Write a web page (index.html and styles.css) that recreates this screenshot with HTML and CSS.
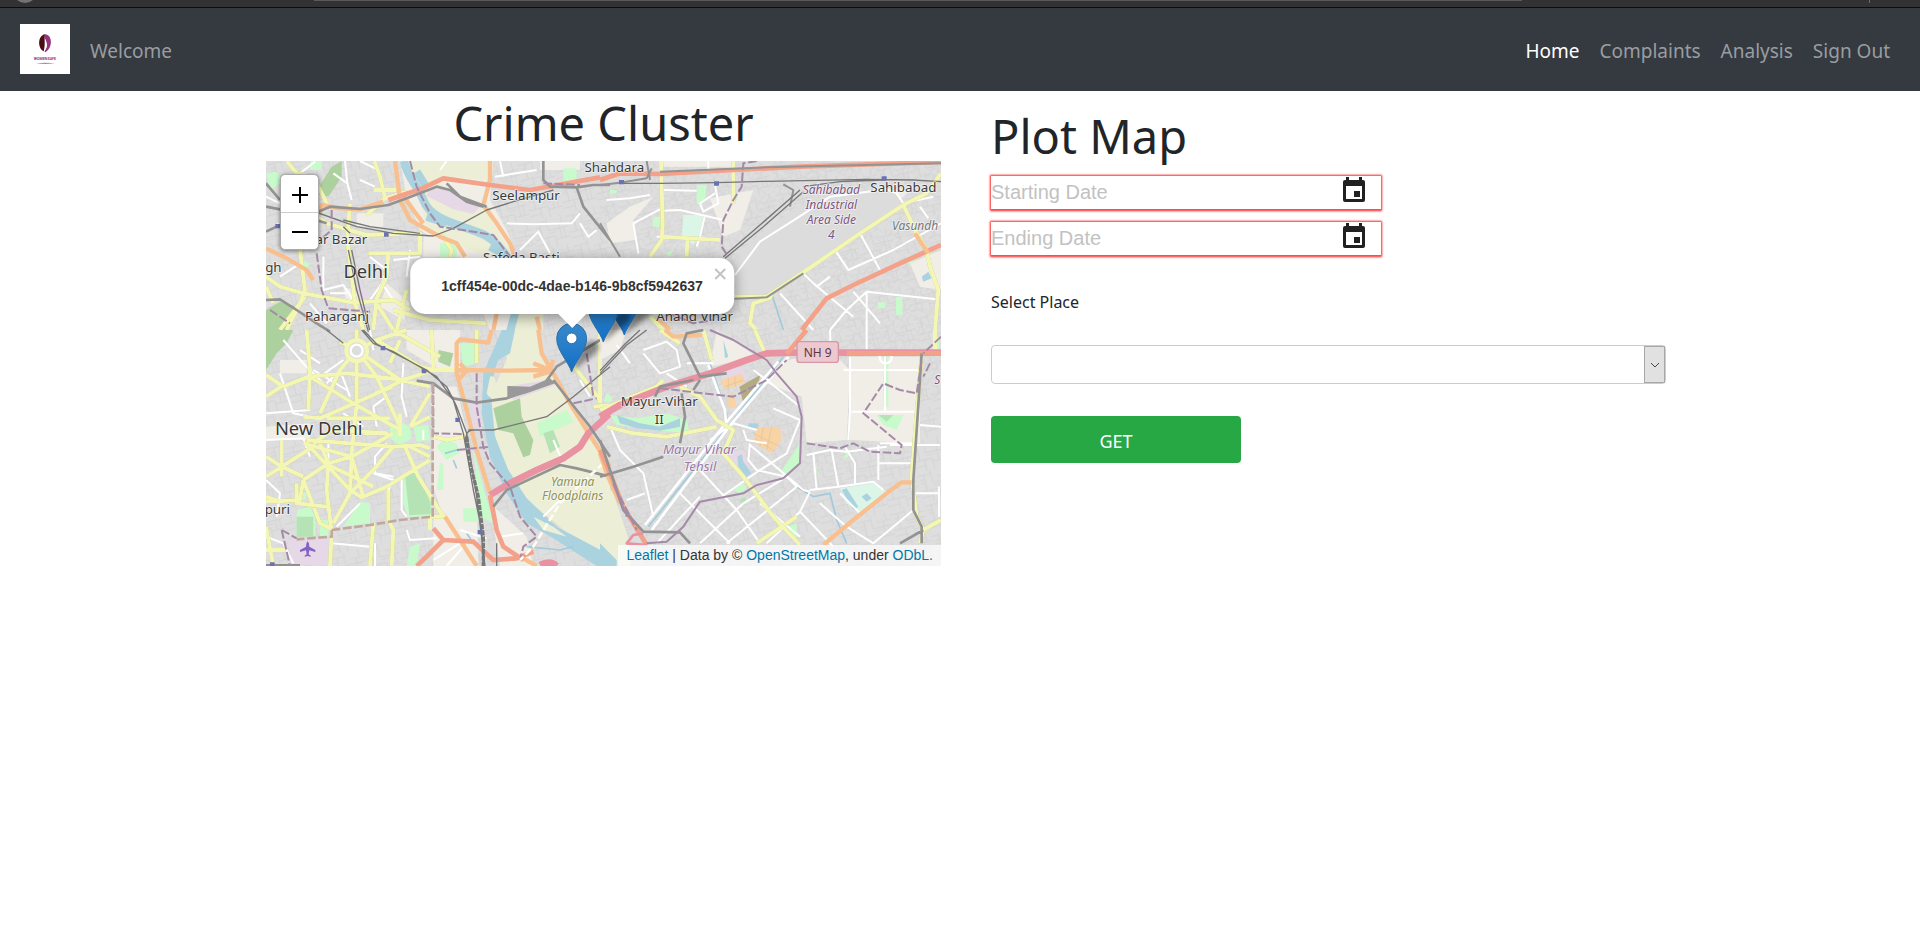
FILE: index.html
```html
<!DOCTYPE html>
<html lang="en">
<head>
<meta charset="utf-8">
<title>Crime Cluster</title>
<link rel="stylesheet" href="styles.css">
</head>
<body>
<div class="chrome" aria-hidden="true">
  <svg class="chrome-knob" viewBox="0 0 28 4"><circle cx="14" cy="-9" r="12" fill="#737373"/></svg>
  <span class="chrome-bar"></span>
  <span class="chrome-sep"></span>
</div>
<nav class="navbar">
  <a class="brand" href="#" aria-label="Logo">
    <svg class="logo" viewBox="0 0 150 150">
      <rect width="150" height="150" fill="#fff"/>
      <path d="M75 31C53 34 52 73 71 82C77 66 72 48 75 31Z" fill="#4a0d12"/>
      <path d="M75 31C98 32 99 72 76 85L73 82C79 75 83 67 80 56L77 47C74 43 73 36 75 31Z" fill="#963383"/>
      <path d="M75 49l4 8v12l-6 14 2-18z" fill="#fff"/>
      <text x="75" y="108" class="logo-text" text-anchor="middle">WOMENSAFE</text>
      <path d="M47 118q29-3 58 0q-29 4-58 0z" fill="#9a929c"/>
    </svg>
  </a>
  <a class="nav-link" href="#">Welcome</a>
  <div class="nav-right">
    <a class="nav-link active" href="#">Home</a>
    <a class="nav-link" href="#">Complaints</a>
    <a class="nav-link" href="#">Analysis</a>
    <a class="nav-link" href="#">Sign Out</a>
  </div>
</nav>
<main class="content">
  <section class="cluster">
    <h1 class="title centered">Crime Cluster</h1>
    <div class="map">
      <svg class="map-art" viewBox="0 0 2025 1215" role="img" aria-label="Map of Delhi">
        <defs>
          <pattern id="blocks" width="104" height="92" patternUnits="userSpaceOnUse" patternTransform="rotate(-14)">
            <path class="lot" d="M0 12H44V40H104M22 12V60M0 60H60V92M60 24H104M78 24V70M60 70H104M36 60V92M8 26H22M8 36H22M44 0V12M88 0V24M90 40V70M0 78H36M46 48H72"/>
          </pattern>
          <pattern id="plots" width="76" height="68" patternUnits="userSpaceOnUse" patternTransform="rotate(33)">
            <path class="lot" d="M0 14H76M0 44H50M18 14V44M34 14V44M50 14V68M64 0V14M18 44V68M50 56H76M34 54V68"/>
          </pattern>
          <linearGradient id="pin" x2="0" y2="1"><stop offset="0" stop-color="#3a8acb"/><stop offset="1" stop-color="#126fc6"/></linearGradient>
          <filter id="soft"><feGaussianBlur stdDeviation="8"/></filter>
          <g id="marker">
            <path d="M0 0L75 -60Q92 -84 66 -92Q42 -94 24 -60Z" fill="#000" opacity=".4" filter="url(#soft)"/>
            <path d="M0 0C-8 -28 -45 -64 -45 -101A45 45 0 0 1 45 -101C45 -64 8 -28 0 0Z" fill="url(#pin)" stroke="#2b6ea8" stroke-width="3"/>
            <circle cy="-101" r="16" fill="#fff" stroke="#2d73ac" stroke-width="3"/>
          </g>
        </defs>
        <rect width="2025" height="1215" fill="#dedede"/>
        <rect width="2025" height="1215" fill="url(#blocks)"/>
        <path d="M1000 0H2025V700L1300 1215H1000Z" fill="url(#plots)" opacity=".7"/>

        <!-- north-west land use -->
        <g transform="translate(-18 -213)">
          <path class="open" d="M420 213H700L690 330L740 420L770 500L800 720H690L600 500L480 420L440 320ZM490 440H600V500H490ZM290 370H370V410H290ZM840 213H960V240H840ZM380 580L450 640L430 690L360 650ZM250 590L330 620L310 650L260 640Z"/>
          <path class="field" d="M440 213H700L690 270L560 262L470 300ZM470 300L540 280L680 360L700 400L760 500H700L600 470L500 410ZM770 670H850V720H760Z"/>
          <path class="pinkish" d="M505 300L560 296L660 350L640 372L580 358L500 318ZM290 560L330 620L300 660Z"/>
          <path class="wood" d="M215 230L245 213V260L205 320L165 310ZM18 660L60 635L110 650L75 720H18Z"/>
          <path class="park" d="M18 250L50 245L70 275L30 300ZM120 510L150 520L140 540L120 530ZM540 460H590V500H540ZM910 235H950V275H910ZM150 213H185V240H150Z"/>
          <path class="water-line" d="M432 213C440 260 475 290 490 330C510 385 580 400 650 425C700 440 730 480 760 530" stroke-width="25"/>
          <path class="water-line" d="M470 245L495 285M500 380L560 400M690 470L730 490M765 670L750 725" stroke-width="24"/>
          <path class="white" d="M255 213L262 280L275 330M262 280L220 250M300 213L345 235M300 270L345 290M120 250L165 215M70 340L110 380L170 390M18 320L60 340M190 500V600L250 585L285 640M330 500L380 540L366 580L330 630M366 580L400 630M210 610H260M400 510L480 500M440 560L450 480M740 400L820 403L935 400L960 370M780 480L835 425L870 490M960 400L985 440L1010 420M705 260L830 240M720 213L730 260M560 213L540 240M50 400L120 440M150 640L200 700M60 560L120 520"/>
          <path class="road" d="M80 213L110 250L160 260L205 350M343 213L360 260L375 325L320 375M375 325L440 305M340 300H410M110 340L200 400L320 435L480 430V490H325M18 560L60 590L130 610L280 638L400 630L450 660M120 480L135 600L120 640L80 720M135 620L60 720M270 340L262 450L285 640L310 720M385 490L380 560L350 625L340 720M350 640L400 720M545 435L575 480L570 500M400 660L510 690L680 700M410 720L440 600M18 590L40 640"/>
          <path class="orange" d="M405 213L420 330L450 390L540 440L590 460L615 500M425 310L460 360L490 400M690 213V270L670 345L710 400L750 460L765 500M180 370L185 345L240 355L300 358L370 335M18 475L80 505L140 540L160 570M700 720L710 670M840 720L830 680"/>
          <path class="red" d="M385 330L480 298L550 265L690 285L810 300L1020 262"/>
          <path class="grey" d="M175 365L210 350L300 357L385 345L440 325L530 290L570 300L620 335L670 350M560 280L600 320L680 350M18 280L60 330M18 350L60 358M100 370L200 400M18 425L60 405M850 213V270L870 290L950 292L1000 285H1050M950 292L970 350L1050 450M18 630L60 628L110 660L170 700L210 725"/>
          <path class="rail" d="M150 360L290 410L400 430L520 438L580 415L680 360L760 335L880 300M250 390L330 410L480 430M265 480L290 600L325 725M275 480L300 600L330 725M250 410L270 430"/>
          <path class="boundary" d="M450 213L470 290L510 370L540 410L640 425L700 435L750 500M215 360V420L180 450M170 490L185 600L205 655L330 665M30 660L90 700M850 280L960 285"/>
          <path class="station" d="M46 402h15v13h-15zM372 427h14v13h-14z"/>
        </g>

        <!-- north-east land use -->
        <g transform="translate(1002 -213)">
          <path class="open" d="M330 325L460 300L420 420L370 440ZM190 213H400V230H190ZM930 520L1023 480V600L960 590ZM20 400L90 350L160 320L100 390L105 450L30 460ZM880 300L940 290L900 330Z"/>
          <path class="park" d="M290 285H320L315 330L290 345ZM160 380H182L178 410H158ZM888 620H907V675H888ZM833 637H855V655H833ZM195 490L220 480L210 500ZM395 315H412V330H395ZM30 300H50V310H30ZM920 500H940V520H920Z"/>
          <path class="mint" d="M250 375H310L300 430L280 465L245 440Z"/>
          <path class="plain" d="M420 480L590 350L720 305L880 300L905 340L780 425L620 540L510 605L405 620Z"/>
          <path class="white" d="M190 300L290 302M190 362L240 360L370 390M325 213V240M345 285L355 340L310 365L300 340L345 310M315 375L300 440L290 470M100 400L185 355M100 400L115 490M20 330L90 325L150 315M405 555L480 455L590 385L690 320L860 298L890 310L910 340L1000 320M705 480L745 540L880 480L1023 400M780 430L840 540M610 550L640 580L760 680M650 590L690 560M540 610L640 720M690 720L740 660L800 605L1010 628M800 605V720M960 350L985 385M760 605L840 700M170 440H190"/>
          <path class="road" d="M183 213L188 400L185 450L150 500M190 440L360 450M262 450L260 500M400 213V340M405 620H500L620 540L780 430L910 345L980 310L1023 250M910 345L950 430L980 480L990 530L1015 600L1005 720M520 620L460 640L450 700L470 720M150 680L190 720"/>
          <path class="red" d="M0 270L60 250L180 252L400 240L600 230L1023 216M605 720L680 625L760 585L900 520L1023 465"/>
          <path class="orange" d="M170 680L210 720M945 430L985 490"/>
          <path class="grey thin" d="M0 285L60 278L140 265L155 235M140 213L150 270M0 400L60 500M400 626L500 622L610 550M180 245L500 232L1023 220M550 283L580 300L570 350"/>
          <path class="rail" d="M60 280L180 280L350 278L500 274L800 268L940 270L1023 275M600 300L480 405L370 500M610 305L490 410L375 505M610 290L720 275L850 270"/>
          <path class="boundary" d="M470 213L430 220L425 290L400 330L370 390L365 470L385 500M170 655L280 700L340 690"/>
          <path class="canal" d="M518 620L550 720"/>
          <path class="station" d="M57 270h15v13h-15zM342 274h15v13h-15zM845 259h15v13h-15z"/>
          <path class="pond" d="M965 560L985 545L995 565L970 575Z"/>
        </g>

        <!-- south-west land use -->
        <g transform="translate(-18 507)">
          <path class="open" d="M520 170H590L620 310L650 500L655 708H520V560L545 550L520 470ZM440 0H600V120H540L440 60ZM18 290L150 280V330H18ZM60 90H140V130H60ZM690 520L800 620L820 708H720Z"/>
          <path class="field" d="M740 0H830L860 100L960 250L1050 440V708H1040L900 590L800 510L740 430L700 300L690 200L740 90Z"/>
          <path class="wood" d="M18 0H100L80 40L50 70L18 120ZM700 235L780 205L785 260L820 330L810 375L790 382L760 310L715 300ZM535 60L580 70L570 110L535 95Z"/>
          <path class="park" d="M430 430L470 420L515 520V560L445 560L430 520ZM420 275L450 290L455 325L420 345L388 325L390 290ZM110 540L150 530L165 560V620L110 615ZM250 590L300 515L330 520V580ZM460 290L505 285L510 330L470 335ZM600 40H650V100L610 110ZM610 535H655V575H610ZM640 360L700 580L660 560ZM450 650L480 640L470 708H440ZM550 330L590 340L600 370L560 390L530 350ZM830 280L920 240L940 275L840 320ZM540 400H550V480H530ZM115 480L140 490L135 510L105 500ZM180 570H205V620H180Z"/>
          <path class="deep" d="M435 435L470 425L512 520V552L448 556ZM110 560H160V620H110ZM850 310L880 300L900 350L870 370Z"/>
          <path class="pinkish" d="M630 220L660 215L665 300L640 290ZM740 170L860 150L900 160L760 210ZM80 630L200 620L210 708L100 700Z"/>
          <path class="water" d="M725 0H765L750 70L715 90Q690 150 695 220L705 320L745 420L800 505L890 590L1050 675V708H1010L880 625L800 580L740 490L690 380L665 250L670 130Z"/>
          <path class="field" d="M690 140Q715 130 705 200Q690 210 680 190ZM820 560L880 590L920 620L850 600Z"/>
          <path class="canal" d="M640 640L620 610M800 650L900 660L940 650"/>
          <path class="white" d="M70 30L130 100L190 160M60 130L100 250L150 260M180 140L250 90M200 160L240 120L270 200M160 120L260 180M120 60L180 100M18 250L150 240M18 330L130 325L150 380M205 330V400M380 340L345 380V430L400 440M340 430L400 450L380 490M430 100L425 200L440 260M340 230L380 200M340 230L350 290M425 440V540L440 560M230 590L300 520M440 600L450 630L530 625M600 600L680 625M520 690L600 640M560 708L610 650M18 450L60 490L50 560M250 250L310 290M215 640L330 650M720 620L790 610M850 560L900 510M330 0L340 60M490 300V330M18 620L70 640L100 700M880 330L910 400M960 150L990 200M345 640V708"/>
          <path class="road" d="M140 0L150 120L145 240M18 135L70 170L145 140L260 130L430 150L520 120M18 200L70 165M150 140L280 220L420 300M180 250L240 120L290 60M290 0V40M240 35L290 60L350 30L440 0M290 60L420 150L510 170M290 60L290 220L275 370L270 490L220 580M290 60L350 140L420 290M440 145L340 195L180 265L130 260M345 190L400 170M200 265H390M510 190L450 290M420 250V320M510 260L450 290M310 310H385M140 330L400 350M130 340L275 380M160 340L215 300L380 310M18 380L65 410L130 440M65 330V440M18 440L160 350M140 340L270 480L310 505M180 340L205 400L200 480L215 610L210 708M130 450L205 400L275 380L400 310M130 450L180 580L220 600M130 450L120 510L18 515M205 405L340 470M275 380L310 500M270 490L340 420L400 350M310 500L380 470L510 390M400 350L480 345L510 355M435 350L475 440L550 560M450 350L510 380M385 480V570L400 600L395 708M18 500L60 515M340 580L330 708M520 320L560 330L620 318M515 120H600M515 0L520 120M350 30L480 110L520 120M390 100L420 30M400 0L540 80M510 560V600M650 0V100M920 80L1020 210M1020 0V220M1000 230L1050 225M110 460V520L200 530M18 590L40 708M18 660H75M510 560H560"/>
          <circle cx="290" cy="62" r="31" class="ring"/><circle cx="290" cy="62" r="18" class="ring-in"/>
          <path class="orange" d="M695 0L685 38L600 28L590 40V130L620 240L650 360L690 490M590 120L740 122L860 120M600 100L620 122L600 145M835 0L845 70L880 130L930 220L980 300L1050 410M820 100L870 120L880 90M555 560L600 630L650 708M780 680L830 708M820 140L870 125"/>
          <path class="motor" d="M1050 250L985 310L960 350L910 385L830 420L740 465L690 495"/>
          <path class="red" d="M690 495L710 600L730 650L790 690M520 595L550 630L640 635L700 690L770 685L820 665M550 630L500 680L470 708"/>
          <path class="motor" d="M840 705Q870 690 890 708"/>
          <path class="grey" d="M470 152L520 160L580 205L650 218L740 205L850 165L890 110L1020 30M700 530L740 480L900 405L950 415L1050 440M880 150L950 240L990 290L1050 380"/>
          <path class="slab" d="M742 168L810 170L870 145L885 160L800 190L742 205Z"/>
          <path class="rail" d="M305 0L340 40L400 65L530 140L580 210L610 310L640 480L665 600L670 708M310 0L350 42L500 120L560 170L590 230L620 310L650 500L675 708M625 300L700 300L860 260L940 200L1050 110M620 350Q610 300 640 300M200 0L250 40M18 705H120M710 640V708"/>
          <path class="rail wide" d="M620 320L630 400L655 500L670 620V708"/>
          <path class="boundary" d="M520 165V310L610 312M650 130V230L670 350L690 400L750 470L780 560L830 620L790 650L780 690M65 600L90 708M65 600L110 625M940 220L1010 205M980 70L1000 200"/>
          <path class="boundary brown" d="M518 160V560M215 600L330 585L420 570L515 560M215 600V620L110 628"/>
          <path class="dotted" d="M1030 400L900 520L820 650L780 690"/>
          <path class="station" d="M362 48h14v13h-14zM485 117h14v13h-14zM586 263h14v13h-14zM653 600h14v13h-14zM30 697h14v12h-14z"/>
          <path class="plane" d="M143 634q5 4 5 16l18 10v6l-18-5-2 12 6 4v3l-9-2-9 2v-3l6-4-2-12-18 5v-6l18-10q0-12 5-16z"/>
          <path class="boundary" d="M590 360L690 350"/>
          <path class="canal" d="M580 390L590 415M555 370L590 360"/>
        </g>

        <!-- south-east land use -->
        <g transform="translate(1002 507)">
          <path class="open" d="M500 160L560 90L700 70L750 120L740 330L620 340L605 200ZM750 80H960V340L750 330ZM350 0L470 80L330 110ZM0 0H80L60 60L0 90Z"/>
          <path class="field" d="M0 440L40 490L90 640V708H0Z"/>
          <path class="park" d="M30 255L110 265L200 250L260 270L270 310L150 300L50 285ZM540 430L600 340V400L560 440ZM830 255H910L890 300L850 285ZM400 480L430 460L440 475L420 490ZM560 590L590 580V630ZM740 360L750 375L730 390ZM850 80H865V230H850ZM1000 20H1018V60H1000ZM20 190L35 200V215H10ZM640 410H650V430H640Z"/>
          <path class="mint" d="M720 475L820 460L860 485L780 550L740 520Z"/>
          <path class="deep" d="M835 255H880L860 275ZM420 510L435 500L442 515L425 525Z"/>
          <path class="water" d="M50 255L120 280L180 290L240 265V290L180 302L110 295L60 280ZM0 640L50 690V708H0ZM725 480L740 475L775 530L760 540ZM445 280H475V295H445ZM370 30L385 80L375 85ZM785 500L800 490L815 505L800 515Z"/>
          <path class="pinkish" d="M370 120L430 110L440 150L370 165ZM380 370L430 360L460 440L440 440Z"/>
          <path class="pond" d="M412 380L425 372L430 395L455 430L440 440L415 410Z"/>
          <path class="market" d="M365 150L425 130L435 160L370 178ZM470 295L540 290L545 330L515 370L460 335ZM380 200L400 190L410 230L385 235Z"/>
          <path class="market-line" d="M460 310L540 350M465 325L525 365M490 290L480 350M515 290L500 360M375 170L430 150M385 145V178M405 140V170"/>
          <path d="M418 170L480 135L478 150L430 220Z" fill="#b3ac82"/>
          <path class="canal" d="M330 100L380 250V290M550 80L400 270L145 590" stroke-width="10"/>
          <path class="white thick" d="M325 105L375 240L380 300M565 80L395 280L155 600M535 95L385 270L135 585"/>
          <path class="canal" d="M590 470L640 500L690 490L710 570L740 640"/>
          <path class="white" d="M130 60L200 35L230 60L240 110L180 130L130 70M50 45L90 100M30 290L60 360L130 430L160 560M80 510L135 490M200 130L260 170M260 100L340 100M330 330L400 280L470 300M430 300L440 330L500 340M450 340L445 390L470 420L560 440M450 345L515 400L610 480L630 485M460 120L500 150L600 230M520 235L600 270M365 500L480 420L560 370L600 270M730 120H955M755 245H950M855 80V245M750 80V240L745 330M620 375L690 360L740 365L860 350M640 370L650 480M695 360L715 470M735 350L765 400V460M835 345V450M835 400H940M715 470L820 455L850 480M630 480L715 470M660 520L740 590L820 640L880 590L940 540M720 490L780 550M630 485L600 545L500 640M600 545L700 650M480 520L600 620M550 430L590 470L380 640M300 420L410 540L480 640M240 490L350 600L390 640M300 500L170 640M560 440L430 520L300 640M940 490H1020M960 285L1023 290M870 345L1020 345M690 0L692 60M800 0V60M1017 470V560M840 340L950 340"/>
          <path class="road" d="M0 240L170 170L190 150M20 290L100 310L200 320L350 290M240 170L300 200L350 270L400 300L370 370L430 440L520 560L600 645M310 0L335 90M465 0L495 70M180 0L240 40M470 640L590 560M1005 0V60M965 80L950 250L935 440L950 560L970 600L1023 570M970 600L960 640"/>
          <circle cx="857" cy="82" r="18" class="ring-in"/>
          <path class="orange" d="M195 0L220 20L305 15M935 457H905L860 490L760 570L670 645M0 370L20 430L60 520"/>
          <path class="motor" d="M0 260L60 225L200 170L330 130L440 90L500 70L580 68H1023"/>
          <path class="red" d="M560 72L620 0M0 360L30 430L70 530L140 645M740 70H1023"/>
          <path class="motor thin" d="M140 645L80 640L100 615L130 610"/>
          <path class="grey" d="M310 0L260 10L250 40L280 100L300 140L380 130M165 200L180 170L280 150M300 150L280 180M245 190L255 260L240 340M0 440L100 410L190 380M0 330L30 420L70 540L130 605L240 607L270 640M965 70L950 300L940 450V540L965 590V640M970 600L900 640"/>
          <path class="rail" d="M0 130L80 45L140 0M0 122L75 42L120 0"/>
          <path class="boundary solid" d="M330 0L400 30L500 90L530 130L590 200L605 260L600 400L550 445L470 465L430 490L300 515L250 590L200 635L140 640"/>
          <path class="boundary" d="M180 175L400 200L500 150L560 90M620 340L720 355L760 340L810 365L900 370L905 345L790 250L850 160L900 180L950 190L965 90M990 100L970 140M1023 20L970 70M40 460L80 560M60 500L110 600"/>
        </g>

        <!-- place names -->
        <g class="place">
          <text x="780" y="116">Seelampur</text>
          <text x="1045" y="32">Shahdara</text>
          <text x="1912" y="92">Sahibabad</text>
          <text x="766" y="302">Safeda Basti</text>
          <text x="226" y="248">ar Bazar</text>
          <text x="299" y="352" class="big">Delhi</text>
          <text x="213" y="481">Paharganj</text>
          <text x="1286" y="481">Anand Vihar</text>
          <text x="1180" y="734">Mayur-Vihar</text>
          <text x="1180" y="788">II</text>
          <text x="158" y="822" class="big">New Delhi</text>
          <text x="22" y="332">gh</text>
          <text x="34" y="1060">puri</text>
          <text x="2014" y="668" class="industry">S</text>
        </g>
        <g class="place industry">
          <text x="1696" y="100">Sahibabad</text><text x="1696" y="145">Industrial</text>
          <text x="1696" y="190">Area Side</text><text x="1696" y="234">4</text>
        </g>
        <g class="place tehsil"><text x="1300" y="880">Mayur Vihar</text><text x="1302" y="929">Tehsil</text></g>
        <g class="place flood"><text x="920" y="974">Yamuna</text><text x="920" y="1018">Floodplains</text></g>
        <text class="place suburb" x="1878" y="208">Vasundh</text>
        <rect x="1593" y="542" width="124" height="62" rx="8" fill="#ecc9d1" stroke="#d994a5" stroke-width="4"/>
        <text class="place shield" x="1655" y="587">NH 9</text>

        <use href="#marker" x="1075" y="522"/>
        <use href="#marker" x="1012" y="543"/>
        <use href="#marker" x="917" y="633"/>
      </svg>
      <div class="zoom">
        <button type="button" aria-label="Zoom in"><svg viewBox="0 0 16 16"><path d="M0 8H16M8 0V16"/></svg></button>
        <button type="button" aria-label="Zoom out"><svg viewBox="0 0 16 16"><path d="M0 8H16"/></svg></button>
      </div>
      <div class="popup">
        <strong>1cff454e-00dc-4dae-b146-9b8cf5942637</strong>
        <button type="button" class="popup-close" aria-label="Close"><svg viewBox="0 0 12 12"><path d="M1 1L11 11M11 1L1 11"/></svg></button>
      </div>
      <div class="attribution"><a href="#">Leaflet</a> | Data by © <a href="#">OpenStreetMap</a>, under <a href="#">ODbL.</a></div>
    </div>
  </section>
  <section class="plot">
    <h1 class="title">Plot Map</h1>
    <form class="form">
      <div class="date-field">
        <input type="text" placeholder="Starting Date" aria-label="Starting Date">
        <svg class="cal" viewBox="0 0 24 26"><path d="M4 0h3v3h10V0h3v3h1a2 2 0 0 1 2 2v18a2 2 0 0 1-2 2H3a2 2 0 0 1-2-2V5a2 2 0 0 1 2-2h1zM4 9v13h16V9zM12 14h6v6h-6z" fill-rule="evenodd"/></svg>
      </div>
      <div class="date-field">
        <input type="text" placeholder="Ending Date" aria-label="Ending Date">
        <svg class="cal" viewBox="0 0 24 26"><path d="M4 0h3v3h10V0h3v3h1a2 2 0 0 1 2 2v18a2 2 0 0 1-2 2H3a2 2 0 0 1-2-2V5a2 2 0 0 1 2-2h1zM4 9v13h16V9zM12 14h6v6h-6z" fill-rule="evenodd"/></svg>
      </div>
      <label class="label" for="place">Select Place</label>
      <div class="select-wrap">
        <select id="place"><option></option></select>
        <span class="arrow"><svg viewBox="0 0 10 6"><path d="M1 1L5 5L9 1"/></svg></span>
      </div>
      <button type="button" class="get">GET</button>
    </form>
  </section>
</main>
</body>
</html>
```
FILE: styles.css
```css
* { box-sizing: border-box; }
body { margin: 0; background: #fff; color: #212529; font-family: "Segoe UI", "Noto Sans", "Open Sans", sans-serif; font-size: 16px; }

.chrome { display: flex; align-items: flex-start; height: 8px; background: #323234; border-bottom: 1px solid #0c0c0d; padding: 0 50px 0 11px; }
.chrome-knob { width: 28px; height: 4px; }
.chrome-bar { width: 65%; height: 1px; margin-left: 275px; background: #5a5a5c; }
.chrome-sep { width: 1px; height: 3px; margin-left: auto; background: #6a6a6c; }

.navbar { display: flex; align-items: center; gap: 20px; padding: 16px 30px 17px 20px; background: #343a40; }
.brand, .logo { display: block; width: 50px; height: 50px; }
.logo-text { font: bold 11px "Roboto", sans-serif; fill: #963383; }
.nav-link { padding-top: 4px; color: #9a9da0; font-size: 19px; line-height: 30px; text-decoration: none; }
.nav-link.active { color: #fff; }
.nav-right { display: flex; gap: 20px; margin-left: auto; }

.content { display: grid; grid-template-columns: 1fr 1fr; gap: 50px; padding: 0 254px 0 266px; }
.title { margin: 0; font-size: 47px; font-weight: 400; line-height: 60px; }
.centered { padding: 2px 0 8px; text-align: center; }
.plot .title { padding-top: 15px; }

.map { position: relative; overflow: hidden; }
.map-art { display: block; width: 100%; }
.lot { fill: none; stroke: #d0d0d0; stroke-width: 2; }
.open { fill: #f1eee8; }
.plain { fill: #dcdcdc; }
.field { fill: #eceed5; }
.wood { fill: #add19e; }
.park { fill: #c8facc; }
.mint { fill: #dbf5e6; }
.deep { fill: #b5e3b5; }
.pinkish { fill: #e6d8e6; }
.water, .pond { fill: #aad3df; }
.market { fill: #f8d3a5; }
.market-line { fill: none; stroke: #e4c093; stroke-width: 2; }
.water-line { fill: none; stroke: #aad3df; stroke-linejoin: round; }
.canal { fill: none; stroke: #9fcbdc; stroke-width: 5; }
.white, .road, .orange, .red, .motor, .grey, .rail, .boundary, .dotted { fill: none; stroke-linejoin: round; }
.white { stroke: #fff; stroke-width: 6; }
.thick { stroke-width: 8; }
.road { stroke: #f4f7b4; stroke-width: 12; filter: drop-shadow(0 0 1px #b9bd78); }
.orange { stroke: #f9c08f; stroke-width: 13; }
.red { stroke: #f4a18a; stroke-width: 14; }
.motor { stroke: #e892a2; stroke-width: 20; }
.grey { stroke: #939393; stroke-width: 8; }
.motor.thin { stroke-width: 8; }
.grey.thin { stroke-width: 6; }
.slab { fill: #999; }
.rail { stroke: #777; stroke-width: 4; }
.wide { stroke-width: 10; stroke-dasharray: 16 3; }
.boundary { stroke: #a58aa8; stroke-width: 6; stroke-dasharray: 26 8; }
.solid { stroke-dasharray: none; }
.brown { stroke: #c2a79c; stroke-width: 8; }
.dotted { stroke: #fffdf0; stroke-width: 8; stroke-dasharray: 22 9; }
.ring { fill: #ddd; stroke: #f4f7b4; stroke-width: 12; }
.ring-in { fill: none; stroke: #fff; stroke-width: 7; }
.station { fill: #6a72b4; }
.plane { fill: #8461c4; }
.place { font-family: "Noto Sans", sans-serif; font-size: 40px; fill: #3a3a3a; stroke: rgba(255, 255, 255, .6); stroke-width: 5; paint-order: stroke; text-anchor: middle; }
.big { font-size: 55px; }
.industry { fill: #7b5680; font-style: italic; font-size: 36px; }
.tehsil { fill: #9c78a6; font-style: italic; }
.flood { fill: #8f9253; font-style: italic; font-size: 36px; }
.suburb { fill: #777; font-style: italic; font-size: 36px; text-anchor: start; }
.shield { fill: #5d3540; font-size: 36px; stroke: none; }

.zoom { position: absolute; left: 14px; top: 13px; border: 1px solid #aaa; border-radius: 5px; background: #fff; box-shadow: 0 1px 4px rgba(0, 0, 0, .5); }
.zoom button { display: grid; place-items: center; width: 37px; height: 37px; padding: 2px 0 0; border: 0; background: none; }
.zoom button + button { border-top: 1px solid #ccc; }
.zoom svg { width: 16px; height: 16px; stroke: #000; stroke-width: 2; }
.popup { position: absolute; left: 306px; bottom: 252px; translate: -50%; padding: 18px 31px; border-radius: 15px; background: #fff; box-shadow: 0 3px 14px rgba(0, 0, 0, .4); color: #333; font: 14px/20px "Liberation Sans", Arial, sans-serif; white-space: nowrap; }
.popup::after { content: ""; position: absolute; left: 50%; top: 100%; translate: -50%; border: 14px solid transparent; border-top-color: #fff; border-bottom: 0; }
.popup-close { position: absolute; top: 10px; right: 8px; width: 12px; height: 12px; padding: 0; border: 0; background: none; }
.popup-close svg { display: block; stroke: #c3c3c3; stroke-width: 2; }
.attribution { position: absolute; right: 0; bottom: 0; padding: 0 8px; background: rgba(255, 255, 255, .7); color: #333; font: 14px/21px "Liberation Sans", Arial, sans-serif; }
.attribution a { color: #0078a8; text-decoration: none; }

.form { display: flex; flex-direction: column; align-items: flex-start; padding-top: 10px; }
.date-field { position: relative; width: 390px; margin-bottom: 12px; }
.date-field input { display: block; width: 100%; height: 34px; padding: 0; border: 0; border-bottom: 1px solid #808080; box-shadow: 0 0 2px 1px #ff2020; font: 20px "Liberation Sans", Arial, sans-serif; background: #fff; }
.date-field input::placeholder { color: #c2c2c2; opacity: 1; }
.cal { position: absolute; right: 15px; top: 1px; width: 24px; height: 26px; fill: #212121; }
.label { margin-top: 22px; line-height: 24px; }
.select-wrap { position: relative; width: 100%; margin: 31px 0 32px; }
.select-wrap select { display: block; width: 100%; height: 39px; border: 1px solid #cbcbd3; border-radius: 4px; background: #fff; appearance: none; }
.arrow { position: absolute; top: 1px; right: 1px; bottom: 1px; display: grid; place-items: center; width: 21px; border: 1px solid #a8a8a8; background: #e1e1e1; pointer-events: none; }
.arrow svg { width: 10px; height: 6px; fill: none; stroke: #444; }
.get { width: 250px; height: 47px; padding-top: 3px; border: 0; border-radius: 4px; background: #28a745; color: #fff; font: 18px "Segoe UI", "Noto Sans", "Open Sans", sans-serif; }
```
